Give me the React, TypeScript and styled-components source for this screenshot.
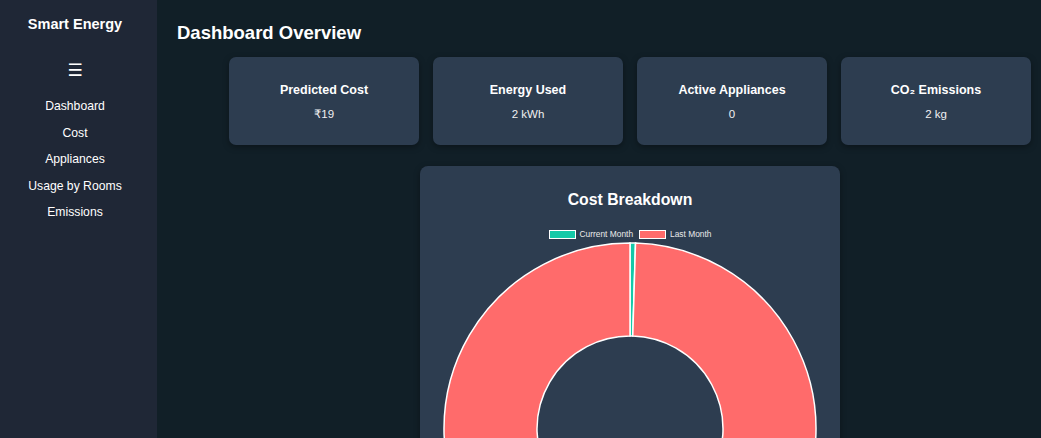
import React, { FC } from "react";
import styled, { createGlobalStyle } from "styled-components";

const GlobalStyle = createGlobalStyle`
  html, body {
    margin: 0;
    padding: 0;
    background: #111f27;
    font-family: "Liberation Sans", Arial, sans-serif;
    overflow: hidden;
  }
`;

const Layout = styled.div`
  display: flex;
  min-height: 100vh;
`;

const Sidebar = styled.aside`
  width: 157px;
  flex-shrink: 0;
  box-sizing: border-box;
  padding: 14px 7px 0 0;
  background: #1f2736;
  color: #fff;
  display: flex;
  flex-direction: column;
  align-items: center;
`;

const Brand = styled.div`
  font-size: 14.5px;
  font-weight: bold;
  line-height: 18px;
  margin-top: 1px;
`;

const Burger = styled.div`
  margin-top: 26px;
  font-size: 17px;
  line-height: 22px;
  font-family: "DejaVu Sans", sans-serif;
`;

const Nav = styled.nav`
  margin-top: 12px;
  display: flex;
  flex-direction: column;
  align-items: center;
`;

const NavItem = styled.a`
  font-size: 12.2px;
  line-height: 26.5px;
  color: #fff;
  text-decoration: none;
`;

const Main = styled.main`
  flex: 1;
  padding: 22px 20px 0 20px;
  color: #fff;
`;

const Title = styled.h2`
  margin: 0;
  font-size: 18.5px;
  line-height: 22px;
  font-weight: bold;
`;

const Content = styled.div`
  margin-left: 52px;
  width: 802px;
  margin-top: 13px;
`;

const Cards = styled.div`
  display: grid;
  grid-template-columns: repeat(4, 1fr);
  gap: 14px;
`;

const Card = styled.div`
  background: #2d3d50;
  border-radius: 7px;
  height: 88px;
  box-shadow: 0 2px 6px rgba(0, 0, 0, 0.35);
  display: flex;
  flex-direction: column;
  align-items: center;
  padding-top: 25px;
  box-sizing: border-box;
`;

const CardTitle = styled.div`
  font-size: 12.5px;
  font-weight: bold;
  line-height: 16px;
`;

const CardValue = styled.div`
  margin-top: 9px;
  font-size: 11.5px;
  line-height: 15px;
  color: #f0f0f0;
  font-family: "Liberation Sans", "DejaVu Sans", sans-serif;
`;

const ChartCard = styled.section`
  margin: 21px auto 0;
  width: 420px;
  height: 480px;
  background: #2d3d50;
  border-radius: 8px;
  box-shadow: 0 2px 6px rgba(0, 0, 0, 0.35);
  padding: 24px 20px 0;
  box-sizing: border-box;
  display: flex;
  flex-direction: column;
  align-items: center;
  overflow: hidden;
`;

const ChartTitle = styled.h3`
  margin: 0;
  font-size: 15.8px;
  line-height: 20px;
  font-weight: bold;
`;

const Legend = styled.div`
  margin-top: 19px;
  display: flex;
  gap: 6px;
  font-size: 8.4px;
  line-height: 10px;
  color: #eaeaea;
`;

const LegendItem = styled.div`
  display: flex;
  align-items: center;
  gap: 4px;
`;

const Swatch = styled.span<{ $color: string }>`
  width: 27px;
  height: 9px;
  box-sizing: border-box;
  border: 1.5px solid #fff;
  background: ${(p) => p.$color};
`;

const DonutSvg = styled.svg`
  display: block;
  flex-shrink: 0;
  margin-top: 2px;
`;

const TEAL = "#14c9a8";
const RED = "#ff6b6b";

const polar = (cx: number, cy: number, r: number, deg: number) => {
  const a = ((deg - 90) * Math.PI) / 180;
  return [cx + r * Math.cos(a), cy + r * Math.sin(a)];
};

const arcPath = (cx: number, cy: number, ro: number, ri: number, a0: number, a1: number) => {
  const large = a1 - a0 > 180 ? 1 : 0;
  const [x0, y0] = polar(cx, cy, ro, a0);
  const [x1, y1] = polar(cx, cy, ro, a1);
  const [x2, y2] = polar(cx, cy, ri, a1);
  const [x3, y3] = polar(cx, cy, ri, a0);
  return `M${x0} ${y0} A${ro} ${ro} 0 ${large} 1 ${x1} ${y1} L${x2} ${y2} A${ri} ${ri} 0 ${large} 0 ${x3} ${y3} Z`;
};

const stats = [
  { label: "Predicted Cost", value: "₹19" },
  { label: "Energy Used", value: "2 kWh" },
  { label: "Active Appliances", value: "0" },
  { label: "CO₂ Emissions", value: "2 kg" },
];

const navItems = ["Dashboard", "Cost", "Appliances", "Usage by Rooms", "Emissions"];

const Donut: FC = () => {
  const cx = 190;
  const cy = 188;
  const split = 1.7;
  return (
    <DonutSvg width={380} height={380} viewBox="0 0 380 380">
      <path d={arcPath(cx, cy, 186, 93, 0, split)} fill={TEAL} stroke="#fff" strokeWidth={1.5} />
      <path d={arcPath(cx, cy, 186, 93, split, 359.999)} fill={RED} stroke="#fff" strokeWidth={1.5} />
    </DonutSvg>
  );
};

const App: FC = () => {
  return (
    <>
      <GlobalStyle />
      <Layout>
        <Sidebar>
          <Brand>Smart Energy</Brand>
          <Burger>☰</Burger>
          <Nav>
            {navItems.map((n) => (
              <NavItem key={n} href="#">
                {n}
              </NavItem>
            ))}
          </Nav>
        </Sidebar>
        <Main>
          <Title>Dashboard Overview</Title>
          <Content>
            <Cards>
              {stats.map((s) => (
                <Card key={s.label}>
                  <CardTitle>{s.label}</CardTitle>
                  <CardValue>{s.value}</CardValue>
                </Card>
              ))}
            </Cards>
            <ChartCard>
              <ChartTitle>Cost Breakdown</ChartTitle>
              <Legend>
                <LegendItem>
                  <Swatch $color={TEAL} />
                  Current Month
                </LegendItem>
                <LegendItem>
                  <Swatch $color={RED} />
                  Last Month
                </LegendItem>
              </Legend>
              <Donut />
            </ChartCard>
          </Content>
        </Main>
      </Layout>
    </>
  );
};

export default App;
